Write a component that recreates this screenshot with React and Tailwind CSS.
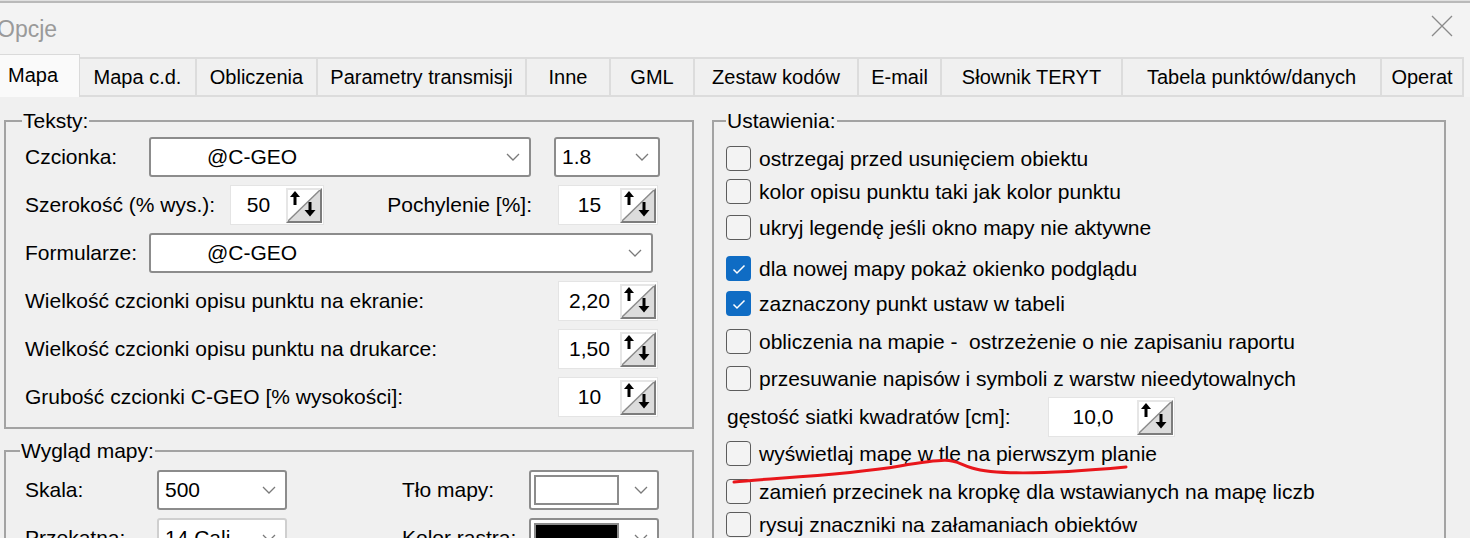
const tabs = [
  ["Mapa c.d.", "w-[117px]"],
  ["Obliczenia", "w-[121px]"],
  ["Parametry transmisji", "w-[209px]"],
  ["Inne", "w-[84px]"],
  ["GML", "w-[84px]"],
  ["Zestaw kodów", "w-[164px]"],
  ["E-mail", "w-[83px]"],
  ["Słownik TERYT", "w-[181px]"],
  ["Tabela punktów/danych", "w-[259px]"],
  ["Operat", "w-[82px]"],
];

const Chevron = () => (
  <svg width="14" height="8" viewBox="0 0 14 8" fill="none">
    <path d="M1 1l6 6 6-6" stroke="#7a7a7a" strokeWidth="1.3" />
  </svg>
);

const SpinBtn = () => (
  <div className="w-[36px] h-[35px] shrink-0 border-2 border-t-[#e6e6e6] border-l-[#e6e6e6] border-r-[#7c7c7c] border-b-[#7c7c7c] bg-white">
    <svg width="32" height="31" viewBox="0 0 32 31">
      <polygon points="32,0 32,31 0,31" fill="#dcdcdc" />
      <line x1="0" y1="31" x2="32" y2="0" stroke="#8a8a8a" strokeWidth="1.4" />
      <polygon points="2,7 7,1 12,7" fill="#000" />
      <rect x="5.5" y="6" width="3" height="9" fill="#000" />
      <rect x="20.5" y="12" width="3" height="9" fill="#000" />
      <polygon points="16.5,20 22,26.5 27.5,20" fill="#000" />
    </svg>
  </div>
);

const Spin = ({ value, w }) => (
  <div className={`${w} h-[40px] bg-white border border-[#e4e4e4] flex items-center pr-[1px]`}>
    <span className="flex-1 text-center">{value}</span>
    <SpinBtn />
  </div>
);

const Select = ({ w, children, dim }) => (
  <div
    className={`${w} h-[40px] bg-white border-2 rounded-[3px] flex items-center justify-between pr-[9px] ${
      dim ? "border-[#cfcfcf]" : "border-[#8c8c8c]"
    }`}
  >
    <div className="flex items-center">{children}</div>
    <Chevron />
  </div>
);

const Check = ({ on }) =>
  on ? (
    <div className="w-[25px] h-[25px] shrink-0 rounded-[4px] bg-[#0f6cc4] flex items-center justify-center">
      <svg width="16" height="12" viewBox="0 0 16 12" fill="none">
        <path d="M2.5 6.5l3.5 3.5 7.5-7.5" stroke="#fff" strokeWidth="1.5" />
      </svg>
    </div>
  ) : (
    <div className="w-[25px] h-[25px] shrink-0 rounded-[4px] border-[1.5px] border-[#5c5c5c] bg-[#f3f3f3]" />
  );

const checks = [
  ["ostrzegaj przed usunięciem obiektu", false, "mt-0"],
  ["kolor opisu punktu taki jak kolor punktu", false, "mt-[8px]"],
  ["ukryj legendę jeśli okno mapy nie aktywne", false, "mt-[11px]"],
  ["dla nowej mapy pokaż okienko podglądu", true, "mt-[16px]"],
  ["zaznaczony punkt ustaw w tabeli", true, "mt-[10px]"],
  ["obliczenia na mapie -  ostrzeżenie o nie zapisaniu raportu", false, "mt-[13px]"],
  ["przesuwanie napisów i symboli z warstw nieedytowalnych", false, "mt-[12px]"],
];

const checks2 = [
  ["wyświetlaj mapę w tle na pierwszym planie", false, "mt-[5px]"],
  ["zamień przecinek na kropkę dla wstawianych na mapę liczb", false, "mt-[13px]"],
  ["rysuj znaczniki na załamaniach obiektów", false, "mt-[8px]"],
];

const CheckRow = ({ label, on, mt }) => (
  <div className={`${mt} h-[25px] flex items-center gap-[8px]`}>
    <Check on={on} />
    <span className="whitespace-pre">{label}</span>
  </div>
);

export default function App() {
  return (
    <div className="w-[1470px] h-[538px] overflow-hidden relative bg-[#f0f0f0] text-black text-[21px] leading-[24px] font-['Liberation_Sans',Arial,sans-serif] flex flex-col">
      <div className="h-[3px] border-t border-t-[#e0e0e0] bg-[#b9b9b9] shrink-0" />

      {/* title bar */}
      <div className="h-[51px] shrink-0 bg-[#f3f3f3] flex items-center justify-between">
        <span className="-ml-[3px] text-[23px] text-[#9a9a9a]">Opcje</span>
        <svg width="22" height="22" viewBox="0 0 22 22" className="mr-[17px] -mt-[6px]">
          <path d="M1 1l20 20M21 1L1 21" stroke="#8a8a8a" strokeWidth="1.3" />
        </svg>
      </div>

      {/* tabs */}
      <div className="h-[43px] shrink-0 flex items-start bg-[#f3f3f3] text-[20px]">
        <div className="w-[80px] h-[43px] bg-[#fafafa] border-t border-r border-[#dadada] pl-[8px] pt-[8px] relative z-10">
          Mapa
        </div>
        {tabs.map(([t, w]) => (
          <div
            key={t}
            className={`${w} mt-[3px] h-[40px] bg-[#f0f0f0] border-2 border-l-0 border-[#dcdcdc] flex items-center justify-center whitespace-nowrap`}
          >
            {t}
          </div>
        ))}
      </div>

      {/* panel */}
      <div className="flex-1 flex gap-[18px] pl-[4px] pt-[12px]">
        <div className="w-[690px] shrink-0 flex flex-col gap-[10px]">
          <fieldset className="h-[320px] border-2 border-[#a3a3a3]">
            <legend className="ml-[16px] px-[1px]">Teksty:</legend>
            <div className="pl-[19px] pt-[4px] flex flex-col gap-[8px]">
              <div className="h-[40px] flex items-center">
                <span className="w-[124px]">Czcionka:</span>
                <Select w="w-[382px]">
                  <span className="pl-[56px]">@C-GEO</span>
                </Select>
                <div className="ml-[23px]">
                  <Select w="w-[106px]">
                    <span className="pl-[6px]">1.8</span>
                  </Select>
                </div>
              </div>
              <div className="h-[40px] flex items-center">
                <span className="w-[205px]">Szerokość (% wys.):</span>
                <Spin value="50" w="w-[94px]" />
                <span className="w-[234px] text-right pr-[26px]">Pochylenie [%]:</span>
                <Spin value="15" w="w-[100px]" />
              </div>
              <div className="h-[40px] flex items-center">
                <span className="w-[124px]">Formularze:</span>
                <Select w="w-[504px]">
                  <span className="pl-[56px]">@C-GEO</span>
                </Select>
              </div>
              <div className="h-[40px] flex items-center">
                <span className="w-[533px]">Wielkość czcionki opisu punktu na ekranie:</span>
                <Spin value="2,20" w="w-[100px]" />
              </div>
              <div className="h-[40px] flex items-center">
                <span className="w-[533px]">Wielkość czcionki opisu punktu na drukarce:</span>
                <Spin value="1,50" w="w-[100px]" />
              </div>
              <div className="h-[40px] flex items-center">
                <span className="w-[533px]">Grubość czcionki C-GEO [% wysokości]:</span>
                <Spin value="10" w="w-[100px]" />
              </div>
            </div>
          </fieldset>

          <fieldset className="h-[200px] border-2 border-[#a3a3a3]">
            <legend className="ml-[14px] px-[1px]">Wygląd mapy:</legend>
            <div className="pl-[19px] pt-[7px] flex flex-col gap-[8px]">
              <div className="h-[40px] flex items-center">
                <span className="w-[132px]">Skala:</span>
                <Select w="w-[130px]">
                  <span className="pl-[6px]">500</span>
                </Select>
                <span className="w-[242px] pl-[115px]">Tło mapy:</span>
                <Select w="w-[130px]">
                  <div className="ml-[3px] w-[85px] h-[30px] border-2 border-[#8c8c8c] bg-white" />
                </Select>
              </div>
              <div className="h-[40px] flex items-center">
                <span className="w-[132px]">Przekątna:</span>
                <Select w="w-[130px]" dim>
                  <span className="pl-[6px]">14 Cali</span>
                </Select>
                <span className="w-[242px] pl-[115px]">Kolor rastra:</span>
                <Select w="w-[130px]">
                  <div className="ml-[3px] w-[85px] h-[30px] border-2 border-[#8c8c8c] bg-black" />
                </Select>
              </div>
            </div>
          </fieldset>
        </div>

        <fieldset className="w-[734px] h-[460px] shrink-0 border-2 border-[#a3a3a3]">
          <legend className="ml-[12px] px-[1px]">Ustawienia:</legend>
          <div className="pl-[12px] pt-[13px] flex flex-col">
            {checks.map(([l, on, mt]) => (
              <CheckRow key={l} label={l} on={on} mt={mt} />
            ))}
            <div className="mt-[7px] h-[38px] flex items-center">
              <span className="w-[322px] pl-[1px]">gęstość siatki kwadratów [cm]:</span>
              <Spin value="10,0" w="w-[127px]" />
            </div>
            {checks2.map(([l, on, mt]) => (
              <CheckRow key={l} label={l} on={on} mt={mt} />
            ))}
          </div>
        </fieldset>
      </div>

      {/* red annotation */}
      <svg className="absolute left-0 top-0 pointer-events-none" width="1470" height="538">
        <path
          d="M734 482 C 770 478, 840 476, 900 466 S 950 461, 972 468 S 1050 474, 1126 467"
          stroke="#e8161b"
          strokeWidth="3"
          fill="none"
          strokeLinecap="round"
        />
      </svg>
    </div>
  );
}
